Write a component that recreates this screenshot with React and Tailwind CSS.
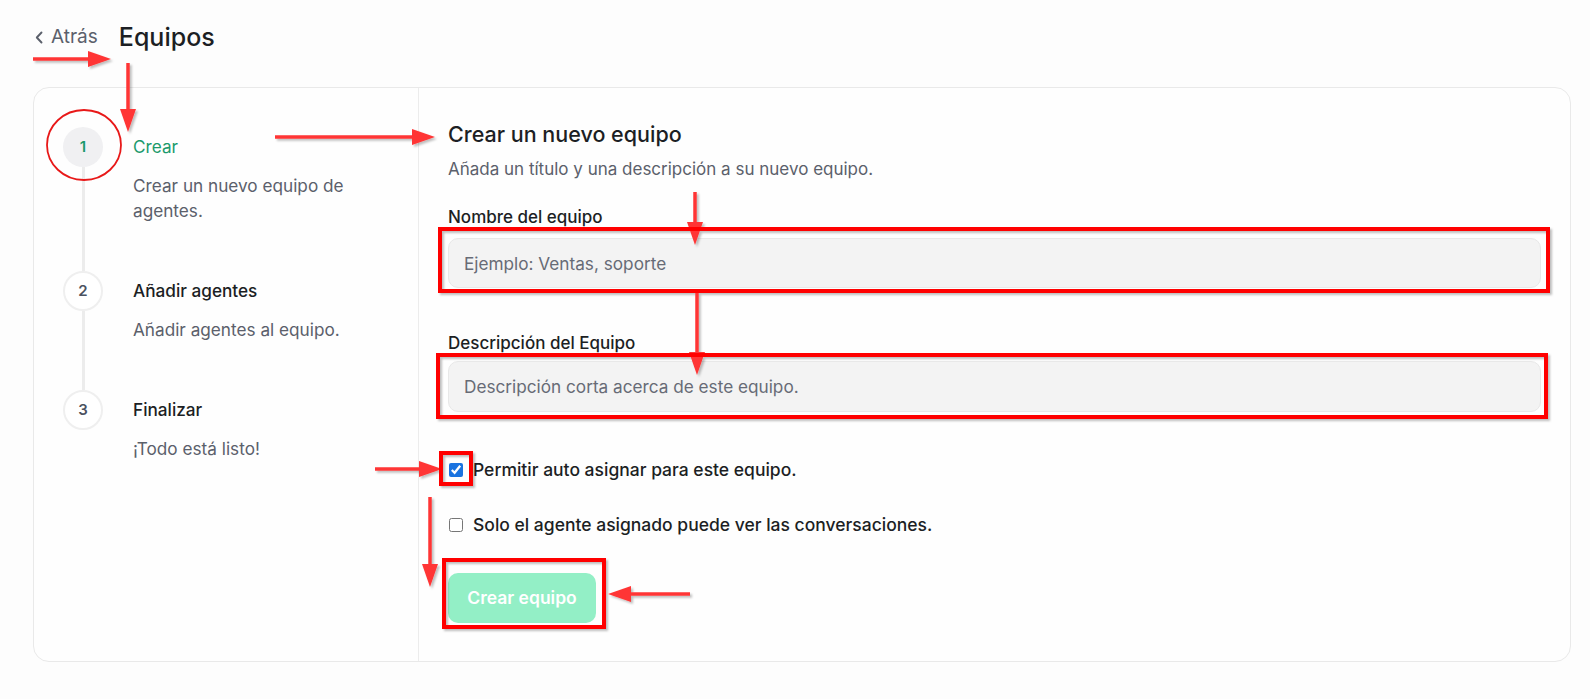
import React, { useState } from 'react'

const steps = [
    { n: 1, title: 'Crear', desc: 'Crear un nuevo equipo de agentes.', active: true },
    { n: 2, title: 'Añadir agentes', desc: 'Añadir agentes al equipo.' },
    { n: 3, title: 'Finalizar', desc: '¡Todo está listo!' },
];

// annotation arrows: [x1, y1, x2, y2] tip at x2,y2
const arrows = [
    [33, 59, 111, 59],
    [128, 63, 128, 132],
    [275, 137, 435, 137],
    [695, 192, 695, 245],
    [697, 292, 697, 375],
    [375, 469, 442, 469],
    [430, 497, 430, 587],
    [690, 594, 608, 594],
];

const boxes = [
    [440, 229, 1108, 62],
    [438, 355, 1108, 62],
    [441, 453, 30, 31],
    [444, 560, 160, 67],
];

const Arrow = ({ a }) => {
    const [x1, y1, x2, y2] = a;
    const dx = x2 - x1, dy = y2 - y1;
    const len = Math.hypot(dx, dy);
    const ux = dx / len, uy = dy / len;
    const bx = x2 - ux * 23, by = y2 - uy * 23;
    const px = -uy * 8, py = ux * 8;
    return (
        <g>
            <line x1={x1} y1={y1} x2={bx} y2={by} stroke="#ff3535" strokeWidth="3.5" />
            <polygon points={`${x2},${y2} ${bx + px},${by + py} ${bx - px},${by - py}`} fill="#ff3535" />
        </g>
    );
};

const Overlay = () => (
    <svg className="absolute left-0 top-0 pointer-events-none" width="1590" height="699" viewBox="0 0 1590 699">
        <defs>
            <filter id="sh" x="-10%" y="-10%" width="120%" height="130%">
                <feDropShadow dx="2" dy="2" stdDeviation="1" floodColor="#000" floodOpacity="0.25" />
            </filter>
        </defs>
        <g filter="url(#sh)">
            {arrows.map((a, i) => <Arrow key={i} a={a} />)}
            {boxes.map(([x, y, w, h], i) => (
                <rect key={i} x={x} y={y} width={w} height={h} fill="none" stroke="#ff0000" strokeWidth="4" />
            ))}
        </g>
        <ellipse cx="84" cy="145" rx="37" ry="35" fill="none" stroke="#e81818" strokeWidth="1.8" />
    </svg>
);

const Step = ({ step, last }) => (
    <div className="flex">
        <div className="flex flex-col items-center w-[40px] shrink-0">
            <div
                className={
                    step.active
                        ? "w-[40px] h-[40px] rounded-full bg-[#f0f0f2] flex items-center justify-center text-[15px] font-semibold text-[#1b9a6c]"
                        : "w-[40px] h-[40px] rounded-full bg-white border-2 border-[#efefef] flex items-center justify-center text-[15px] font-semibold text-[#4b5260]"
                }
            >
                {step.n}
            </div>
            {!last && <div className="flex-1 w-[3px] bg-[#ececec]" />}
        </div>
        <div className={"ml-[30px] w-[255px] pt-[8px] " + (last ? "" : "pb-[48px]")}>
            <p className={"text-[17.2px] leading-[24px] " + (step.active ? "text-[#1b9a6c]" : "text-[#1c1f24] font-medium")}>
                {step.title}
            </p>
            <p className="mt-[14px] text-[17.2px] leading-[25px] text-[#5b606b]">{step.desc}</p>
        </div>
    </div>
);

export default function App() {
    const [autoAssign, setAutoAssign] = useState(true);
    const [onlyAssigned, setOnlyAssigned] = useState(false);

    return (
        <div className="relative w-full min-h-screen bg-[#fdfdfd] font-['Inter','Liberation_Sans',sans-serif] text-[#1c1f24]">
            <div className="flex items-center pl-[35px] pt-[21px] h-[53px]">
                <button className="flex items-center gap-[8px] text-[19px] text-[#5b606b]">
                    <svg width="8" height="13" viewBox="0 0 8 13" fill="none">
                        <path d="M6.5 1.5 L1.8 6.5 L6.5 11.5" stroke="#5b606b" strokeWidth="1.9" strokeLinecap="round" strokeLinejoin="round" />
                    </svg>
                    Atrás
                </button>
                <h1 className="ml-[21px] text-[25px] leading-[32px] font-medium text-[#1c1f24]">Equipos</h1>
            </div>

            <div className="ml-[33px] mt-[34px] w-[1538px] h-[575px] rounded-2xl border border-[#e9e9e9] bg-[#fefefe] flex">
                <div className="w-[385px] shrink-0 border-r border-[#ececec] pl-[29px] pt-[39px]">
                    {steps.map((s, i) => (
                        <Step key={s.n} step={s} last={i === steps.length - 1} />
                    ))}
                </div>

                <div className="flex-1 pl-[29px] pr-[29px] pt-[32px]">
                    <h2 className="text-[21.5px] leading-[28px] font-medium text-[#1c1f24]">Crear un nuevo equipo</h2>
                    <p className="mt-[9px] text-[17px] leading-[24px] text-[#5b606b]">
                        Añada un título y una descripción a su nuevo equipo.
                    </p>

                    <label className="block mt-[24px] text-[17px] leading-[24px] font-medium text-[#1c1f24]">
                        Nombre del equipo
                    </label>
                    <input
                        type="text"
                        placeholder="Ejemplo: Ventas, soporte"
                        className="mt-[9px] w-full h-[50px] rounded-[10px] border border-[#e8e8e8] bg-[#f3f3f3] px-[15px] text-[17.2px] placeholder:text-[#676b76] outline-none"
                    />

                    <label className="block mt-[43px] text-[17px] leading-[24px] font-medium text-[#1c1f24]">
                        Descripción del Equipo
                    </label>
                    <input
                        type="text"
                        placeholder="Descripción corta acerca de este equipo."
                        className="mt-[6px] w-full h-[51px] rounded-[10px] border border-[#e8e8e8] bg-[#f3f3f3] px-[15px] text-[17.2px] placeholder:text-[#676b76] outline-none"
                    />

                    <div className="mt-[46px] flex flex-col gap-[31px]">
                        <label className="flex items-center h-[24px] text-[17.5px] font-medium text-[#1c1f24]">
                            <input
                                type="checkbox"
                                checked={autoAssign}
                                onChange={(e) => setAutoAssign(e.target.checked)}
                                className="m-0 ml-[1px] w-[14px] h-[14px] accent-[#1a73e0]"
                            />
                            <span className="ml-[10px]">Permitir auto asignar para este equipo.</span>
                        </label>
                        <label className="flex items-center h-[24px] text-[17.5px] font-medium text-[#1c1f24]">
                            <input
                                type="checkbox"
                                checked={onlyAssigned}
                                onChange={(e) => setOnlyAssigned(e.target.checked)}
                                className="m-0 ml-[1px] w-[14px] h-[14px] accent-[#1a73e0]"
                            />
                            <span className="ml-[10px]">Solo el agente asignado puede ver las conversaciones.</span>
                        </label>
                    </div>

                    <button
                        disabled
                        className="mt-[36px] w-[148px] h-[50px] rounded-[10px] bg-[#93efc6] text-white text-[17.5px] font-semibold"
                    >
                        Crear equipo
                    </button>
                </div>
            </div>

            <Overlay />
        </div>
    )
}
